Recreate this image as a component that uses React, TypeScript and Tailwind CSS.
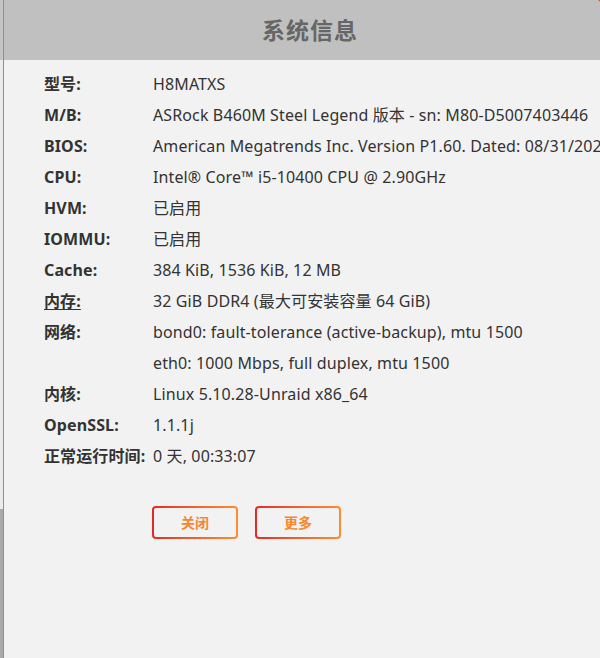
import React from 'react';

interface InfoRow {
  label: string;
  value: string;
  link?: boolean;
}

const rows: InfoRow[] = [
  { label: '型号:', value: 'H8MATXS' },
  { label: 'M/B:', value: 'ASRock B460M Steel Legend 版本 - sn: M80-D5007403446' },
  { label: 'BIOS:', value: 'American Megatrends Inc. Version P1.60. Dated: 08/31/2020' },
  { label: 'CPU:', value: 'Intel® Core™ i5-10400 CPU @ 2.90GHz' },
  { label: 'HVM:', value: '已启用' },
  { label: 'IOMMU:', value: '已启用' },
  { label: 'Cache:', value: '384 KiB, 1536 KiB, 12 MB' },
  { label: '内存:', value: '32 GiB DDR4 (最大可安装容量 64 GiB)', link: true },
  { label: '网络:', value: 'bond0: fault-tolerance (active-backup), mtu 1500' },
  { label: '', value: 'eth0: 1000 Mbps, full duplex, mtu 1500' },
  { label: '内核:', value: 'Linux 5.10.28-Unraid x86_64' },
  { label: 'OpenSSL:', value: '1.1.1j' },
  { label: '正常运行时间:', value: '0 天, 00:33:07' },
];

const GradientButton = ({ children }: { children: React.ReactNode }) => (
  <button className="rounded-[4px] bg-gradient-to-r from-[#e22828] to-[#ff8c2f] p-[2px]">
    <span className="flex h-[29px] w-[82px] items-center justify-center rounded-[2px] bg-[#f2f2f2] text-[14px] font-bold text-[#f7862f]">
      {children}
    </span>
  </button>
);

const App = () => {
  return (
    <div
      className="relative flex h-[658px] w-[600px] overflow-hidden bg-[#f2f2f2]"
      style={{ fontFamily: '"Noto Sans", "Open Sans", "Noto Sans CJK SC", sans-serif' }}
    >
      {/* sliver of the page behind the dialog */}
      <div className="flex w-[3px] shrink-0 flex-col">
        <div className="h-[60px] bg-[#c4c4c4]" />
        <div className="h-[449px] bg-[#ececec]" />
        <div className="flex-1 bg-[#a9a9a9]" />
      </div>

      <div className="flex w-[613px] shrink-0 flex-col border-l border-[#8f8f8f] bg-[#f2f2f2]">
        <div className="flex h-[60px] items-center justify-center bg-[#c0c0c0]">
          <h1 className="text-[23px] font-bold tracking-[1px] text-[#666666]">系统信息</h1>
        </div>

        <div className="pl-[40px] pt-[8px] text-[16px] tracking-[0.12px] text-[#333333]">
          {rows.map((row, i) => (
            <div key={i} className="flex h-[31px] items-center whitespace-nowrap">
              <span className={`w-[109px] shrink-0 font-bold ${row.link ? 'underline underline-offset-2' : ''}`}>
                {row.label}
              </span>
              <span>{row.value}</span>
            </div>
          ))}

          <div className="mt-[35px] flex gap-[17px] pl-[108px]">
            <GradientButton>关闭</GradientButton>
            <GradientButton>更多</GradientButton>
          </div>
        </div>
      </div>

      {/* edge of the close button in the corner */}
      <div className="absolute right-[-18px] top-[-18px] h-[22px] w-[22px] rounded-full bg-[#d63a12]" />
    </div>
  );
};

export default App;
